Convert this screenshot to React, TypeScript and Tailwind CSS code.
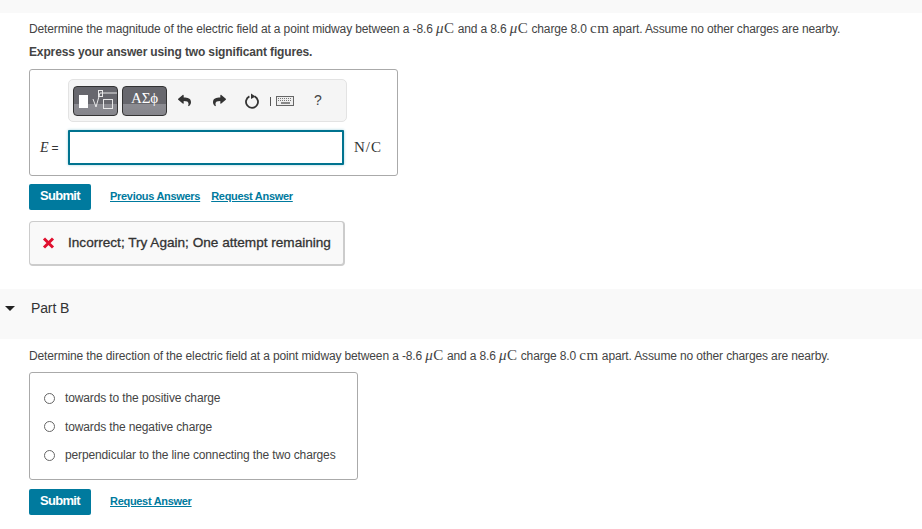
import { FaReply, FaShare } from "react-icons/fa";

function M({ children }: { children: React.ReactNode }) {
  return <span className="font-['Liberation_Serif',serif] text-[15px] leading-none tracking-[0.5px]">{children}</span>;
}

function MicroC() {
  return (
    <M>
      <i>μ</i>C
    </M>
  );
}

function Submit() {
  return (
    <button className="w-[62px] h-[26px] bg-[#007a9e] rounded-[2px] text-white text-[13px] font-bold tracking-[-0.7px] pb-[3px]">
      Submit
    </button>
  );
}

function Link({ children }: { children: React.ReactNode }) {
  return <a className="text-[#007a9e] text-[11px] font-bold tracking-[-0.3px] underline">{children}</a>;
}

function Radio({ label }: { label: string }) {
  return (
    <div className="flex items-center h-[28.5px]">
      <span className="w-[11px] h-[11px] rounded-full border border-[#666] bg-white" />
      <span className="ml-[10px] text-[12px] text-[#444]">{label}</span>
    </div>
  );
}

function ToolButton({ children }: { children: React.ReactNode }) {
  return (
    <div className="relative w-[45px] h-[30px] rounded-[4px] border border-[#333] bg-[linear-gradient(#67676d_0,#67676d_60%,#8c8c92_60%,#85858b_100%)] overflow-hidden">
      {children}
    </div>
  );
}

function Keyboard() {
  return (
    <svg width="24" height="12" viewBox="0 0 24 12">
      <rect x="0" y="2" width="1" height="9" fill="#555" />
      <rect x="6.5" y="1.5" width="17" height="9" fill="#eee" stroke="#666" />
      <path d="M8 3.5h14M8 5.5h14" stroke="#777" strokeDasharray="1 1" />
      <path d="M11 8h9" stroke="#666" strokeWidth="1.5" />
    </svg>
  );
}

export default function App() {
  return (
    <div className="w-[922px] h-[529px] overflow-hidden bg-white font-['Liberation_Sans',sans-serif] text-[#444] text-[12px] tracking-[-0.135px]">
      <div className="h-[13px] bg-[#f9f9f9]" />
      <div className="pl-[29px]">
        <p className="mt-[7px] h-[18px] leading-[18px] whitespace-nowrap">
          Determine the magnitude of the electric field at a point midway between a -8.6 <MicroC /> and a 8.6{" "}
          <MicroC /> charge 8.0 <M>cm</M> apart. Assume no other charges are nearby.
        </p>
        <p className="mt-[5px] h-[18px] leading-[18px] font-bold">Express your answer using two significant figures.</p>

        <div className="mt-[8px] w-[369px] h-[107px] border border-[#aaa] rounded-[3px] pl-[38px] pt-[9px]">
          <div className="w-[279px] h-[43px] bg-[#f5f5f5] border border-[#e3e3e3] rounded-[5px] flex items-center pl-[4px] text-[#333]">
            <ToolButton>
              <span className="absolute left-[5px] top-[8px] w-[9px] h-[13px] bg-white" />
              <svg width="28" height="24" viewBox="0 0 28 24" className="absolute left-[16px] top-[2px]" fill="none" stroke="#e8e8e8">
                <rect x="8.5" y="1.5" width="4" height="6" />
                <path d="M3 10l3 8l4 -14h17" />
                <rect x="13.5" y="10.5" width="9" height="9" />
              </svg>
            </ToolButton>
            <div className="ml-[4px]">
              <ToolButton>
                <span className="absolute inset-x-0 top-[2px] text-center text-white text-[15px] leading-[18px] font-['Liberation_Serif',serif]">
                  ΑΣϕ
                </span>
              </ToolButton>
            </div>
            <FaReply className="ml-[11px] text-[#333] text-[13px]" />
            <FaShare className="ml-[22px] text-[#333] text-[13px]" />
            <svg width="16" height="16" viewBox="0 0 16 16" className="ml-[18px]" fill="none">
              <path d="M10.6 3.4a6 6 0 1 1 -5.2 0" stroke="#333" strokeWidth="1.8" />
              <path d="M7 0.5l4.5 3l-4.5 2.5z" fill="#333" />
            </svg>
            <div className="ml-[10px]">
              <Keyboard />
            </div>
            <span className="ml-[20px] text-[14px] text-[#444]">?</span>
          </div>
          <div className="mt-[8px] flex items-center relative">
            <span className="absolute left-[-28px] text-[12px] text-[#333]">
              <i className="font-['Liberation_Serif',serif] text-[14px]">E</i> =
            </span>
            <div className="w-[276px] h-[35px] border-2 border-[#00738f] bg-white shadow-[0_0_3px_#9fd0dc] rounded-[1px]" />
            <span className="ml-[10px] font-['Liberation_Serif',serif] text-[15px] tracking-[1px] text-[#333]">N/C</span>
          </div>
        </div>

        <div className="mt-[8px] flex items-center">
          <Submit />
          <div className="ml-[19px] pb-[2px] flex gap-[11px]">
            <Link>Previous Answers</Link>
            <Link>Request Answer</Link>
          </div>
        </div>

        <div className="mt-[11px] w-[316px] h-[45px] border border-[#ccc] border-b-2 border-r-2 rounded-[4px] bg-[#f9f9f9] flex items-center pl-[12px]">
          <svg width="13" height="12" viewBox="0 0 13 12">
            <path d="M2 1.5l9 9M11 1.5l-9 9" stroke="#e0102f" strokeWidth="3" />
          </svg>
          <span className="ml-[13px] pt-[1px] text-[13.6px] tracking-normal text-[#333] [-webkit-text-stroke:0.3px_#333]">
            Incorrect; Try Again; One attempt remaining
          </span>
        </div>
      </div>

      <div className="mt-[23px] h-[50px] bg-[#f9f9f9] flex items-center pb-[12px]">
        <span className="ml-[5px] w-0 h-0 border-x-[5px] border-x-transparent border-t-[5px] border-t-[#222]" />
        <span className="ml-[16px] text-[14px] text-[#333]">Part B</span>
      </div>

      <div className="pl-[29px]">
        <p className="mt-[8px] h-[18px] leading-[18px] whitespace-nowrap">
          Determine the direction of the electric field at a point midway between a -8.6 <MicroC /> and a 8.6{" "}
          <MicroC /> charge 8.0 <M>cm</M> apart. Assume no other charges are nearby.
        </p>
        <div className="mt-[7px] w-[329px] h-[108px] border border-[#aaa] rounded-[3px] pl-[14px] pt-[10.75px]">
          <Radio label="towards to the positive charge" />
          <Radio label="towards the negative charge" />
          <Radio label="perpendicular to the line connecting the two charges" />
        </div>
        <div className="mt-[9px] flex items-center">
          <Submit />
          <div className="ml-[19px] pb-[2px]">
            <Link>Request Answer</Link>
          </div>
        </div>
      </div>
    </div>
  );
}
